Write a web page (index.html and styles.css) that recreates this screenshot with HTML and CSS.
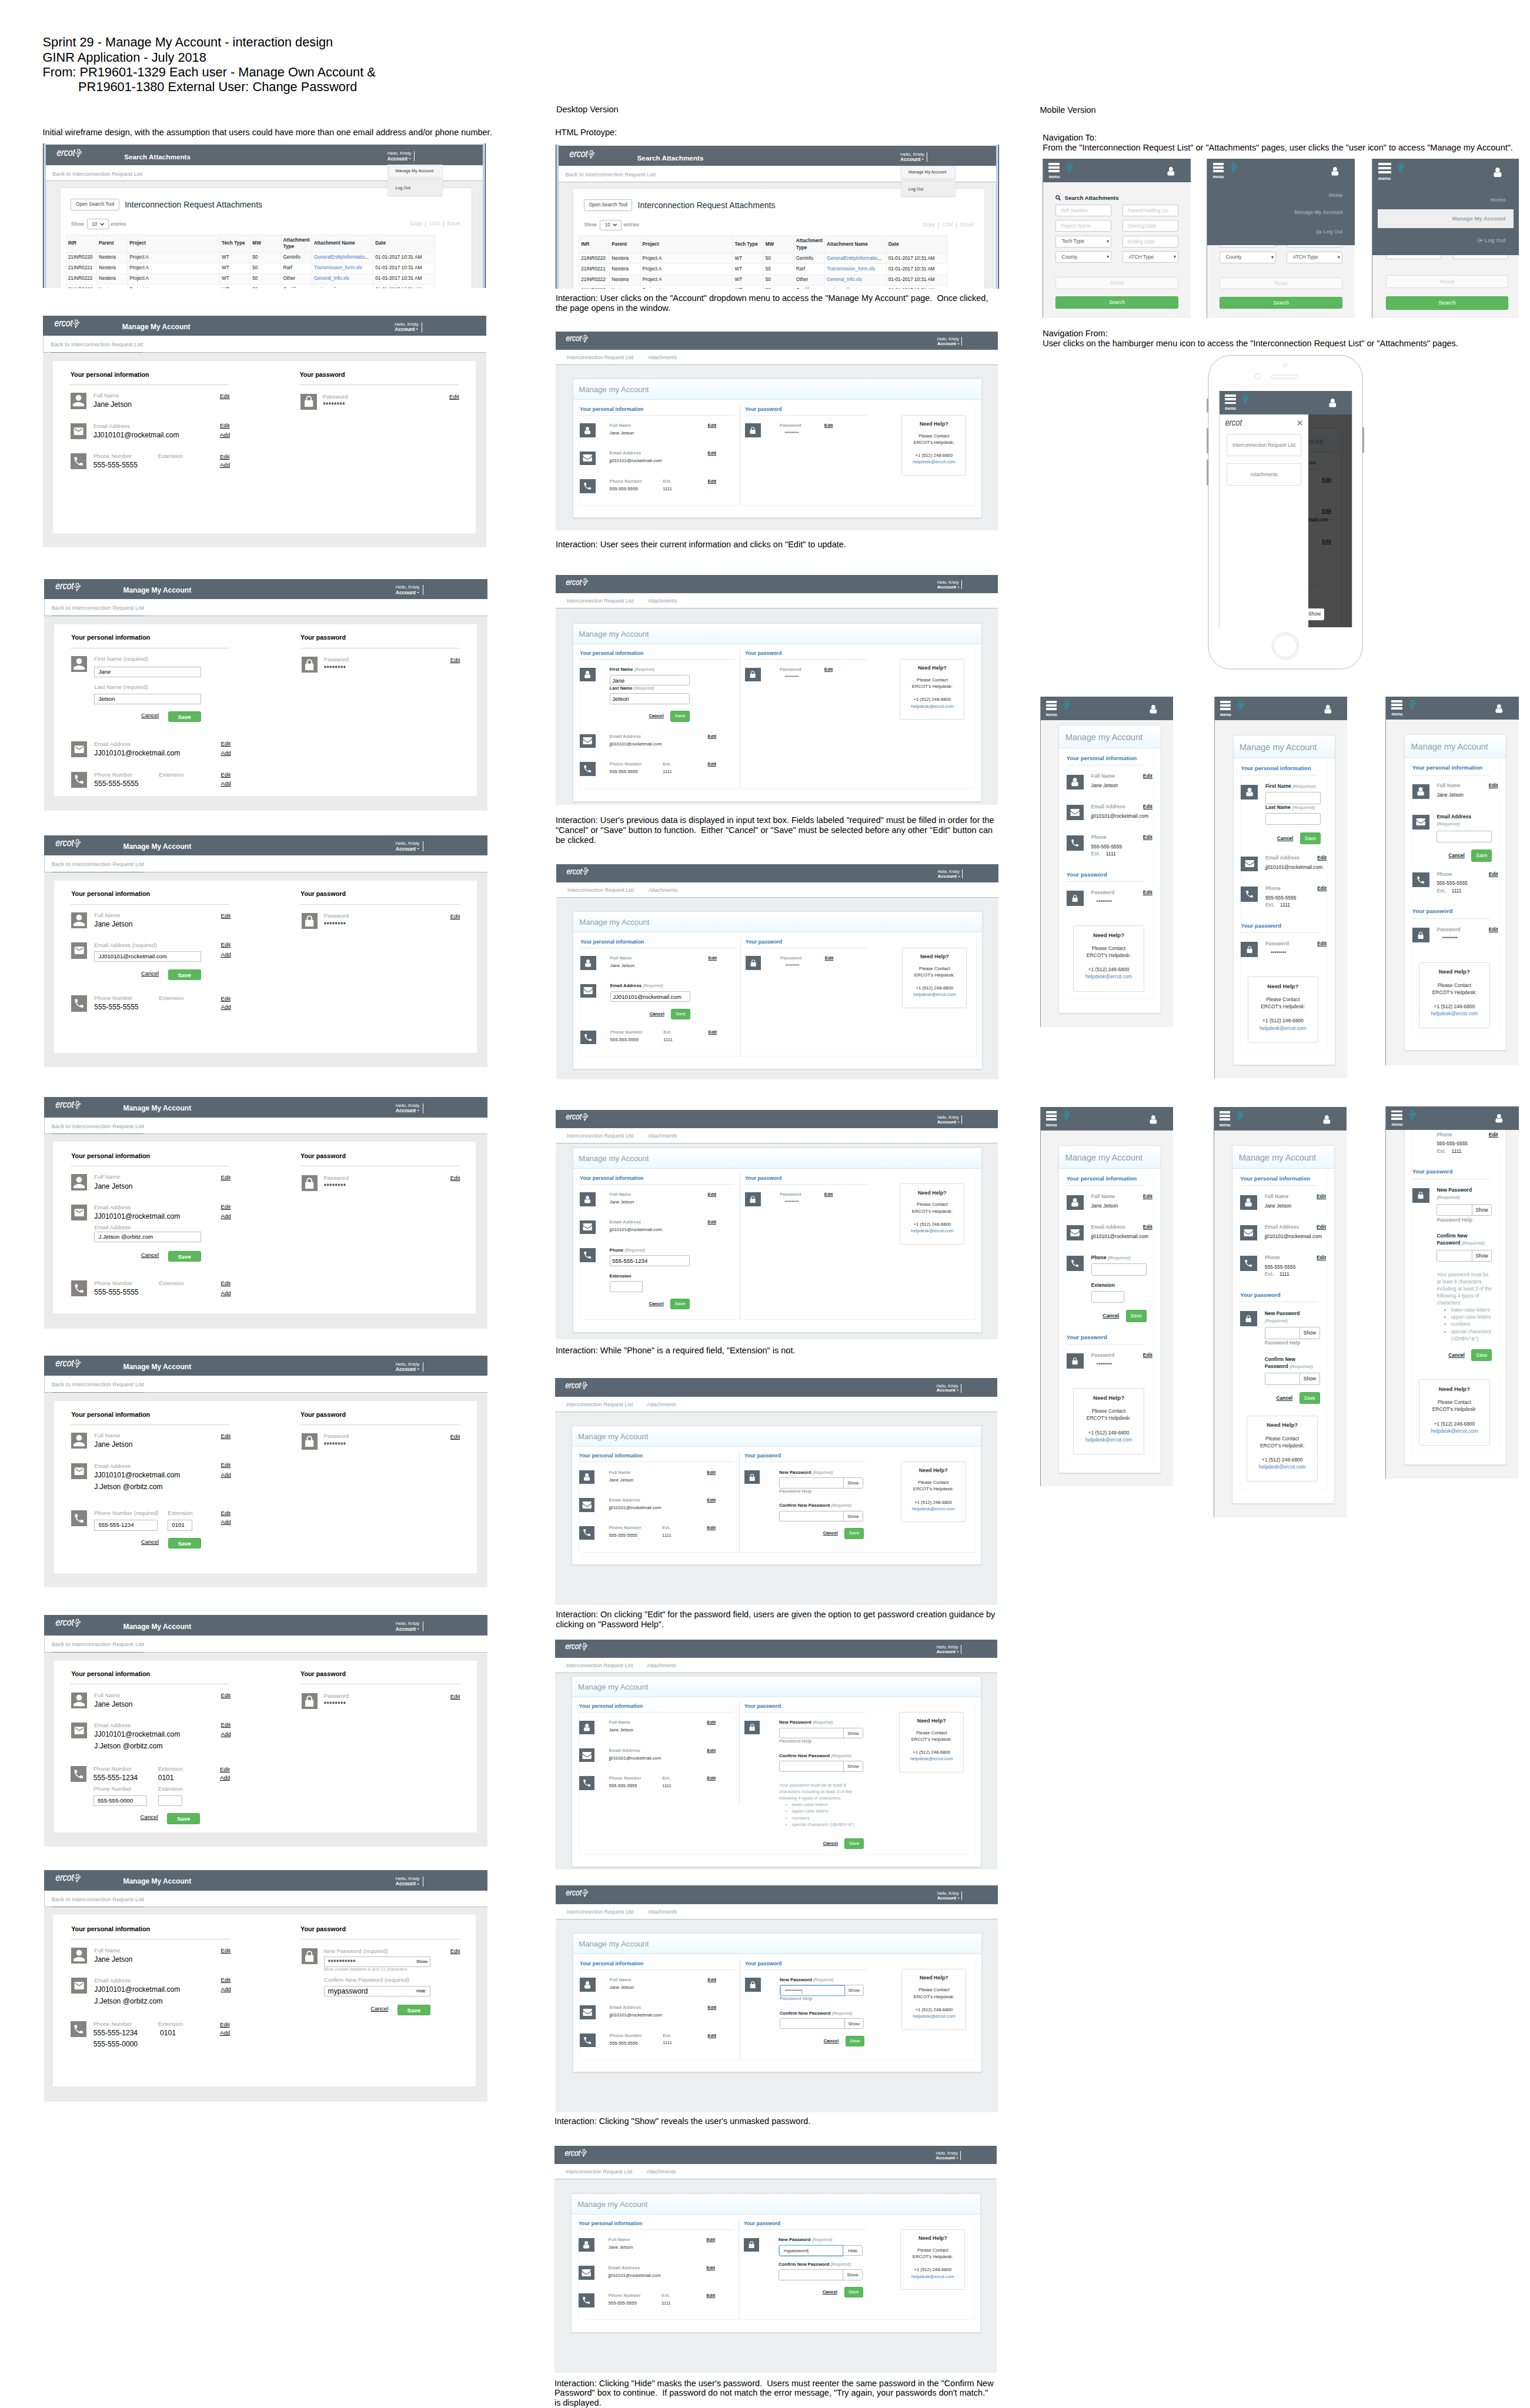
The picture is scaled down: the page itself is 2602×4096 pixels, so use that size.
FILE: index.html
```html
<!DOCTYPE html>
<html lang="en">
<head>
<meta charset="utf-8">
<title>Sprint 29 - Manage My Account - interaction design</title>
<link rel="stylesheet" href="styles.css">
</head>
<body>
<svg class="defs" aria-hidden="true">
  <symbol id="texas" viewBox="0 0 24 28"><path d="M9 10V1.500h7.500L15.500 6c2 2.500 5 1 7.500 4.500M9 10c4-.5 4.500 2.500 8 2M1 11.500c4.500-.5 5 4.500 9 4s5.500-4.500 13-4.500M7.500 19c3 0 2.500 3.500 3 7.500 1.500-4 4-8.500 9-12" fill="none" stroke="currentColor" stroke-width="2.200" stroke-linejoin="round"/></symbol>
  <symbol id="m-user" viewBox="0 0 24 24"><path d="M12 12c2.210 0 4-1.790 4-4s-1.790-4-4-4-4 1.790-4 4 1.790 4 4 4zm0 2c-2.670 0-8 1.340-8 4v1c0 .6.4 1 1 1h14c.6 0 1-.4 1-1v-1c0-2.660-5.330-4-8-4z"/></symbol>
  <symbol id="m-mail" viewBox="0 0 24 24"><path d="M20 4H4c-1.100 0-2 .9-2 2v12c0 1.100.9 2 2 2h16c1.100 0 2-.9 2-2V6c0-1.100-.9-2-2-2zm0 4l-8 5-8-5V6l8 5 8-5v2z"/></symbol>
  <symbol id="phone" viewBox="0 0 24 24"><path d="M6.620 10.790c1.440 2.830 3.760 5.140 6.590 6.590l2.200-2.200c.27-.27.67-.36 1.020-.24 1.120.37 2.330.57 3.570.57.55 0 1 .45 1 1V20c0 .55-.45 1-1 1-9.390 0-17-7.610-17-17 0-.55.45-1 1-1h3.500c.55 0 1 .45 1 1 0 1.250.2 2.450.57 3.570.11.35.03.74-.25 1.020l-2.200 2.200z"/></symbol>
  <symbol id="lock" viewBox="0 0 24 32"><rect x="0" y="13" width="24" height="19" rx="2.500"/><path d="M5.500 15V9a6.500 7 0 0 1 13 0v6" fill="none" stroke="currentColor" stroke-width="3.200"/></symbol>
  <symbol id="f-user" viewBox="0 0 20 24"><ellipse cx="10" cy="6.300" rx="5.500" ry="6.200"/><path d="M.3 19c0-5 1.500-7.800 4.300-7.800 1.500 1.400 3.400 2.100 5.400 2.100s3.900-.7 5.400-2.100c2.800 0 4.300 2.800 4.300 7.800 0 3-1.800 4.900-4.200 4.900h-11C2.100 23.900.3 22 .3 19z"/></symbol>
  <symbol id="f-mail" viewBox="0 0 28 22"><path d="M0 2.500C0 1 1 0 2.500 0h23C27 0 28 1 28 2.500c0 2-1.500 3.700-3 4.800l-8.500 5.900c-1.600 1.100-3.400 1.100-5 0L3 7.300C1.500 6.200 0 4.500 0 2.500zM0 7.500c.5.6 1 1 1.600 1.400l9 6.200c2.200 1.500 4.600 1.500 6.800 0l9-6.200c.6-.4 1.100-.8 1.600-1.400v12c0 1.400-1.100 2.500-2.500 2.500h-23C1.100 22 0 20.900 0 19.500z"/></symbol>
  <symbol id="search" viewBox="0 0 16 16"><circle cx="6.500" cy="6.500" r="5" fill="none" stroke="currentColor" stroke-width="2.200"/><path d="M10 10l5 5" stroke="currentColor" stroke-width="2.800"/></symbol>
  <symbol id="exit" viewBox="0 0 16 14"><path d="M7 1H3C1.900 1 1 1.900 1 3v8c0 1.100.9 2 2 2h4" fill="none" stroke="currentColor" stroke-width="2"/><path d="M5 5h5V2l6 5-6 5V9H5z"/></symbol>
</svg>

<main class="board">

<!-- Column 1: wireframes -->
<section class="col col-wire">
  <h1 class="title">Sprint 29 - Manage My Account - interaction design<br>GINR Application - July 2018<br>From: PR19601-1329 Each user - Manage Own Account &amp;<br>&nbsp;&nbsp;&nbsp;&nbsp;&nbsp;&nbsp;&nbsp;&nbsp;&nbsp;&nbsp;PR19601-1380 External User: Change Password</h1>
  <p class="cap">Initial wireframe design, with the assumption that users could have more than one email address and/or phone number.</p>

  <article class="legacy">
    <header class="bar"><span class="logo"><i>ercot</i><svg><use href="#texas"/></svg></span><h2>Search Attachments</h2><div class="who"><span>Hello, Kristy</span><b>Account<i class="caret"></i></b>
      <ul class="drop"><li>Manage My Account</li><li>Log Out</li></ul></div></header>
    <nav class="crumb">Back to Interconnection Request List</nav>
    <div class="paper">
      <div class="head"><span class="tool">Open Search Tool</span><h3>Interconnection Request Attachments</h3></div>
      <div class="opts"><b>Show</b><span class="sel">10<svg viewBox="0 0 12 8"><path d="M1 1.500l5 5 5-5" fill="none" stroke="#222" stroke-width="2.200"/></svg></span><b>entries</b><span class="exp"><span>Copy</span><span>CSV</span><span>Excel</span></span></div>
      <table><colgroup><col class="c1"><col class="c1"><col class="c3"><col class="c1"><col class="c1"><col class="c1"><col class="c2"><col class="c2"></colgroup>
        <tr><th>INR</th><th>Parent</th><th>Project</th><th>Tech Type</th><th>MW</th><th>Attachment Type</th><th>Attachment Name</th><th>Date</th></tr>
        <tr><td>21INR0220</td><td>Nextera</td><td>Project A</td><td>WT</td><td>50</td><td>GenInfo</td><td><a>GeneralEntityInformatio</a>...</td><td>01-01-2017 10:31 AM</td></tr>
        <tr><td>21INR0221</td><td>Nextera</td><td>Project A</td><td>WT</td><td>50</td><td>Rarf</td><td><a>Transmission_form.xls</a></td><td>01-01-2017 10:31 AM</td></tr>
        <tr><td>21INR0222</td><td>Nextera</td><td>Project A</td><td>WT</td><td>50</td><td>Other</td><td><a>General_Info.xls</a></td><td>01-01-2017 10:31 AM</td></tr>
        <tr><td>21INR0223</td><td>Nextera</td><td>Project A</td><td>WT</td><td>50</td><td>Genlife</td><td><a>testing.pdf</a></td><td>01-01-2017 10:31 AM</td></tr>
      </table>
    </div>
  </article>

  <article class="wire w1">
    <header class="bar"><span class="logo"><i>ercot</i><svg><use href="#texas"/></svg></span><h2>Manage My Account</h2><div class="who"><span>Hello, Kristy</span><b>Account<i class="caret"></i></b></div></header>
    <nav class="crumb"><span>Back to Interconnection Request List</span></nav>
    <div class="sheet">
      <div class="info"><h3>Your personal information</h3>
        <div class="row"><span class="ico user"><svg><use href="#m-user"/></svg></span><div><p class="l">Full Name</p><p class="v">Jane Jetson</p></div><div class="links"><a>Edit</a></div></div>
        <div class="row mail"><span class="ico"><svg><use href="#m-mail"/></svg></span><div><p class="l">Email Address</p><p class="v">JJ010101@rocketmail.com</p></div><div class="links"><a>Edit</a><a>Add</a></div></div>
        <div class="row"><span class="ico"><svg><use href="#phone"/></svg></span><div class="pair"><p class="l">Phone Number</p><p class="l">Extension</p><p class="v">555-555-5555</p></div><div class="links"><a>Edit</a><a>Add</a></div></div>
      </div>
      <div class="pass"><h3>Your password</h3>
        <div class="row"><span class="ico key"><svg><use href="#lock"/></svg></span><div><p class="l">Password</p><p class="v stars">********</p></div><div class="links"><a>Edit</a></div></div>
      </div>
    </div>
  </article>

  <article class="wire w2">
    <header class="bar"><span class="logo"><i>ercot</i><svg><use href="#texas"/></svg></span><h2>Manage My Account</h2><div class="who"><span>Hello, Kristy</span><b>Account<i class="caret"></i></b></div></header>
    <nav class="crumb"><span>Back to Interconnection Request List</span></nav>
    <div class="sheet">
      <div class="info"><h3>Your personal information</h3>
        <div class="row name"><span class="ico user"><svg><use href="#m-user"/></svg></span><div><p class="l">First Name (required)</p><p class="fld t13">Jane</p><p class="l t20">Last Name (required)</p><p class="fld t9">Jetson</p><div class="act"><a>Cancel</a><span class="save">Save</span></div></div></div>
        <div class="row mail"><span class="ico"><svg><use href="#m-mail"/></svg></span><div><p class="l">Email Address</p><p class="v">JJ010101@rocketmail.com</p></div><div class="links"><a>Edit</a><a>Add</a></div></div>
        <div class="row"><span class="ico"><svg><use href="#phone"/></svg></span><div class="pair"><p class="l">Phone Number</p><p class="l">Extension</p><p class="v">555-555-5555</p></div><div class="links"><a>Edit</a><a>Add</a></div></div>
      </div>
      <div class="pass"><h3>Your password</h3>
        <div class="row"><span class="ico key"><svg><use href="#lock"/></svg></span><div><p class="l">Password</p><p class="v stars">********</p></div><div class="links"><a>Edit</a></div></div>
      </div>
    </div>
  </article>

  <article class="wire w3">
    <header class="bar"><span class="logo"><i>ercot</i><svg><use href="#texas"/></svg></span><h2>Manage My Account</h2><div class="who"><span>Hello, Kristy</span><b>Account<i class="caret"></i></b></div></header>
    <nav class="crumb"><span>Back to Interconnection Request List</span></nav>
    <div class="sheet">
      <div class="info"><h3>Your personal information</h3>
        <div class="row"><span class="ico user"><svg><use href="#m-user"/></svg></span><div><p class="l">Full Name</p><p class="v">Jane Jetson</p></div><div class="links"><a>Edit</a></div></div>
        <div class="row mail"><span class="ico"><svg><use href="#m-mail"/></svg></span><div><p class="l">Email Address (required)</p><p class="fld t8">JJ010101@rocketmail.com</p><div class="act"><a>Cancel</a><span class="save">Save</span></div></div><div class="links"><a>Edit</a><a>Add</a></div></div>
        <div class="row"><span class="ico"><svg><use href="#phone"/></svg></span><div class="pair"><p class="l">Phone Number</p><p class="l">Extension</p><p class="v">555-555-5555</p></div><div class="links"><a>Edit</a><a>Add</a></div></div>
      </div>
      <div class="pass"><h3>Your password</h3>
        <div class="row"><span class="ico key"><svg><use href="#lock"/></svg></span><div><p class="l">Password</p><p class="v stars">********</p></div><div class="links"><a>Edit</a></div></div>
      </div>
    </div>
  </article>

  <article class="wire w4 inset">
    <header class="bar"><span class="logo"><i>ercot</i><svg><use href="#texas"/></svg></span><h2>Manage My Account</h2><div class="who"><span>Hello, Kristy</span><b>Account<i class="caret"></i></b></div></header>
    <nav class="crumb"><span>Back to Interconnection Request List</span></nav>
    <div class="sheet">
      <div class="info"><h3>Your personal information</h3>
        <div class="row"><span class="ico user"><svg><use href="#m-user"/></svg></span><div><p class="l">Full Name</p><p class="v">Jane Jetson</p></div><div class="links"><a>Edit</a></div></div>
        <div class="row mail"><span class="ico"><svg><use href="#m-mail"/></svg></span><div><p class="l">Email Address</p><p class="v">JJ010101@rocketmail.com</p><p class="l t11">Email Address</p><p class="fld t3">J.Jetson @orbitz.com</p><div class="act t25"><a>Cancel</a><span class="save">Save</span></div></div><div class="links"><a>Edit</a><a>Add</a></div></div>
        <div class="row"><span class="ico"><svg><use href="#phone"/></svg></span><div class="pair"><p class="l">Phone Number</p><p class="l">Extension</p><p class="v">555-555-5555</p></div><div class="links"><a>Edit</a><a class="t4">Add</a></div></div>
      </div>
      <div class="pass"><h3>Your password</h3>
        <div class="row"><span class="ico key"><svg><use href="#lock"/></svg></span><div><p class="l">Password</p><p class="v stars">********</p></div><div class="links"><a>Edit</a></div></div>
      </div>
    </div>
  </article>

  <article class="wire w5">
    <header class="bar"><span class="logo"><i>ercot</i><svg><use href="#texas"/></svg></span><h2>Manage My Account</h2><div class="who"><span>Hello, Kristy</span><b>Account<i class="caret"></i></b></div></header>
    <nav class="crumb"><span>Back to Interconnection Request List</span></nav>
    <div class="sheet">
      <div class="info"><h3>Your personal information</h3>
        <div class="row"><span class="ico user"><svg><use href="#m-user"/></svg></span><div><p class="l">Full Name</p><p class="v">Jane Jetson</p></div><div class="links"><a>Edit</a></div></div>
        <div class="row mail"><span class="ico"><svg><use href="#m-mail"/></svg></span><div><p class="l">Email Address</p><p class="v">JJ010101@rocketmail.com</p><p class="v t9">J.Jetson @orbitz.com</p></div><div class="links"><a>Edit</a><a>Add</a></div></div>
        <div class="row"><span class="ico"><svg><use href="#phone"/></svg></span><div><div class="pair far"><p class="l">Phone Number (required)</p><p class="l">Extension</p><p class="fld tel t11">555-555-1234</p><p class="fld ext t11">0101</p></div><div class="act"><a>Cancel</a><span class="save">Save</span></div></div><div class="links"><a>Edit</a><a>Add</a></div></div>
      </div>
      <div class="pass"><h3>Your password</h3>
        <div class="row"><span class="ico key"><svg><use href="#lock"/></svg></span><div><p class="l">Password</p><p class="v stars">********</p></div><div class="links"><a>Edit</a></div></div>
      </div>
    </div>
  </article>

  <article class="wire w6">
    <header class="bar"><span class="logo"><i>ercot</i><svg><use href="#texas"/></svg></span><h2>Manage My Account</h2><div class="who"><span>Hello, Kristy</span><b>Account<i class="caret"></i></b></div></header>
    <nav class="crumb"><span>Back to Interconnection Request List</span></nav>
    <div class="sheet">
      <div class="info"><h3>Your personal information</h3>
        <div class="row"><span class="ico user"><svg><use href="#m-user"/></svg></span><div><p class="l">Full Name</p><p class="v">Jane Jetson</p></div><div class="links"><a>Edit</a></div></div>
        <div class="row mail"><span class="ico"><svg><use href="#m-mail"/></svg></span><div><p class="l">Email Address</p><p class="v">JJ010101@rocketmail.com</p><p class="v">J.Jetson @orbitz.com</p></div><div class="links"><a>Edit</a><a>Add</a></div></div>
        <div class="row tel-row"><span class="ico"><svg><use href="#phone"/></svg></span><div><div class="pair"><p class="l">Phone Number</p><p class="l">Extension</p><p class="v">555-555-1234</p><p class="v">0101</p><p class="l t11">Phone Number</p><p class="l t11">Extension</p><p class="fld tel2 t9">555-555-0000</p><p class="fld ext t9"></p></div><div class="act"><a>Cancel</a><span class="save">Save</span></div></div><div class="links"><a>Edit</a><a>Add</a></div></div>
      </div>
      <div class="pass"><h3>Your password</h3>
        <div class="row"><span class="ico key"><svg><use href="#lock"/></svg></span><div><p class="l">Password</p><p class="v stars">********</p></div><div class="links"><a>Edit</a></div></div>
      </div>
    </div>
  </article>

  <article class="wire w7 inset">
    <header class="bar"><span class="logo"><i>ercot</i><svg><use href="#texas"/></svg></span><h2>Manage My Account</h2><div class="who"><span>Hello, Kristy</span><b>Account<i class="caret"></i></b></div></header>
    <nav class="crumb"><span>Back to Interconnection Request List</span></nav>
    <div class="sheet">
      <div class="info"><h3>Your personal information</h3>
        <div class="row"><span class="ico user"><svg><use href="#m-user"/></svg></span><div><p class="l">Full Name</p><p class="v">Jane Jetson</p></div><div class="links"><a>Edit</a></div></div>
        <div class="row mail"><span class="ico"><svg><use href="#m-mail"/></svg></span><div><p class="l">Email Address</p><p class="v">JJ010101@rocketmail.com</p><p class="v">J.Jetson @orbitz.com</p></div><div class="links"><a>Edit</a><a>Add</a></div></div>
        <div class="row tel-row"><span class="ico"><svg><use href="#phone"/></svg></span><div class="pair"><p class="l">Phone Number</p><p class="l">Extension</p><p class="v">555-555-1234</p><p class="v">&nbsp;0101</p><p class="v t8">555-555-0000</p></div><div class="links"><a>Edit</a><a>Add</a></div></div>
      </div>
      <div class="pass"><h3>Your password</h3>
        <div class="row"><span class="ico key"><svg><use href="#lock"/></svg></span><div><p class="l">New Password (required)</p><p class="fld t6 secret"><span>**********</span><small>Show</small></p><p class="hint">Must contain between 6 and 12 characters</p><p class="l t15">Confirm New Password (required)</p><p class="fld t7 big"><span>mypassword</span><small>Hide</small></p><div class="act t24"><a>Cancel</a><span class="save">Save</span></div></div><div class="links"><a>Edit</a></div></div>
      </div>
    </div>
  </article>
</section>

<!-- Column 2: desktop prototype -->
<section class="col col-desk">
  <h2 class="cap x5">Desktop Version</h2>
  <h2 class="cap x2">HTML Protoype:</h2>

  <article class="legacy x3">
    <header class="bar"><span class="logo"><i>ercot</i><svg><use href="#texas"/></svg></span><h2>Search Attachments</h2><div class="who"><span>Hello, Kristy</span><b>Account<i class="caret"></i></b>
      <ul class="drop"><li>Manage My Account</li><li>Log Out</li></ul></div></header>
    <nav class="crumb">Back to Interconnection Request List</nav>
    <div class="paper">
      <div class="head"><span class="tool">Open Search Tool</span><h3>Interconnection Request Attachments</h3></div>
      <div class="opts"><b>Show</b><span class="sel">10<svg viewBox="0 0 12 8"><path d="M1 1.500l5 5 5-5" fill="none" stroke="#222" stroke-width="2.200"/></svg></span><b>entries</b><span class="exp"><span>Copy</span><span>CSV</span><span>Excel</span></span></div>
      <table><colgroup><col class="c1"><col class="c1"><col class="c3"><col class="c1"><col class="c1"><col class="c1"><col class="c2"><col class="c2"></colgroup>
        <tr><th>INR</th><th>Parent</th><th>Project</th><th>Tech Type</th><th>MW</th><th>Attachment Type</th><th>Attachment Name</th><th>Date</th></tr>
        <tr><td>21INR0220</td><td>Nextera</td><td>Project A</td><td>WT</td><td>50</td><td>GenInfo</td><td><a>GeneralEntityInformatio</a>...</td><td>01-01-2017 10:31 AM</td></tr>
        <tr><td>21INR0221</td><td>Nextera</td><td>Project A</td><td>WT</td><td>50</td><td>Rarf</td><td><a>Transmission_form.xls</a></td><td>01-01-2017 10:31 AM</td></tr>
        <tr><td>21INR0222</td><td>Nextera</td><td>Project A</td><td>WT</td><td>50</td><td>Other</td><td><a>General_Info.xls</a></td><td>01-01-2017 10:31 AM</td></tr>
        <tr><td>21INR0223</td><td>Nextera</td><td>Project A</td><td>WT</td><td>50</td><td>Genlife</td><td><a>testing.pdf</a></td><td>01-01-2017 10:31 AM</td></tr>
      </table>
    </div>
  </article>
  <p class="cap x3">Interaction: User clicks on the "Account" dropdown menu to access the "Manage My Account" page.&nbsp; Once clicked,<br>the page opens in the window.</p>

  <article class="proto pa x3">
    <header class="bar"><span class="logo"><i>ercot</i><svg><use href="#texas"/></svg></span><div class="who"><span>Hello, Kristy</span><b>Account<i class="caret"></i></b></div></header>
    <nav class="tabs"><span>Interconnection Request List</span><span>Attachments</span></nav>
    <div class="card"><h2>Manage my Account</h2>
      <div class="in">
        <div class="info"><h3>Your personal information</h3>
          <div class="row"><span class="ico"><svg class="g-user"><use href="#f-user"/></svg></span><div><p class="l">Full Name</p><p class="v">Jane Jetson</p></div><a>Edit</a></div>
          <div class="row"><span class="ico"><svg class="g-mail"><use href="#f-mail"/></svg></span><div><p class="l">Email Address</p><p class="v">jj010101@rocketmail.com</p></div><a>Edit</a></div>
          <div class="row"><span class="ico"><svg class="g-phone"><use href="#phone"/></svg></span><div class="pair"><p class="l">Phone Number</p><p class="l">Ext.</p><p class="v">555-555-5555</p><p class="v">1111</p></div><a>Edit</a></div>
        </div>
        <div class="pass"><h3>Your password</h3>
          <div class="row"><span class="ico"><svg class="g-lock"><use href="#lock"/></svg></span><div><p class="l">Password</p><p class="v stars">********</p></div><a>Edit</a></div>
        </div>
        <aside class="help"><h4>Need Help?</h4><p>Please Contact<br>ERCOT's Helpdesk:<br><br>+1 (512) 248-6800<br><a>helpdesk@ercot.com</a></p></aside>
      </div>
    </div>
  </article>
  <p class="cap x3">Interaction: User sees their current information and clicks on "Edit" to update.</p>

  <article class="proto pb x3">
    <header class="bar"><span class="logo"><i>ercot</i><svg><use href="#texas"/></svg></span><div class="who"><span>Hello, Kristy</span><b>Account<i class="caret"></i></b></div></header>
    <nav class="tabs"><span>Interconnection Request List</span><span>Attachments</span></nav>
    <div class="card"><h2>Manage my Account</h2>
      <div class="in">
        <div class="info"><h3>Your personal information</h3>
          <div class="row name"><span class="ico"><svg class="g-user"><use href="#f-user"/></svg></span><div><p class="l on">First Name <i>(Required)</i></p><p class="fld t6">Jane</p><p class="l on">Last Name <i>(Required)</i></p><p class="fld t6">Jetson</p><div class="act"><a>Cancel</a><span class="save">Save</span></div></div></div>
          <div class="row"><span class="ico"><svg class="g-mail"><use href="#f-mail"/></svg></span><div><p class="l">Email Address</p><p class="v">jj010101@rocketmail.com</p></div><a>Edit</a></div>
          <div class="row"><span class="ico"><svg class="g-phone"><use href="#phone"/></svg></span><div class="pair"><p class="l">Phone Number</p><p class="l">Ext.</p><p class="v">555-555-5555</p><p class="v">1111</p></div><a>Edit</a></div>
        </div>
        <div class="pass"><h3>Your password</h3>
          <div class="row"><span class="ico"><svg class="g-lock"><use href="#lock"/></svg></span><div><p class="l">Password</p><p class="v stars">********</p></div><a>Edit</a></div>
        </div>
        <aside class="help"><h4>Need Help?</h4><p>Please Contact<br>ERCOT's Helpdesk:<br><br>+1 (512) 248-6800<br><a>helpdesk@ercot.com</a></p></aside>
      </div>
    </div>
  </article>
  <p class="cap x3">Interaction: User's previous data is displayed in input text box. Fields labeled "required" must be filled in order for the<br>"Cancel" or "Save" button to function.&nbsp; Either "Cancel" or "Save" must be selected before any other "Edit" button can<br>be clicked.</p>

  <article class="proto pc x5">
    <header class="bar"><span class="logo"><i>ercot</i><svg><use href="#texas"/></svg></span><div class="who"><span>Hello, Kristy</span><b>Account<i class="caret"></i></b></div></header>
    <nav class="tabs"><span>Interconnection Request List</span><span>Attachments</span></nav>
    <div class="card"><h2>Manage my Account</h2>
      <div class="in">
        <div class="info"><h3>Your personal information</h3>
          <div class="row"><span class="ico"><svg class="g-user"><use href="#f-user"/></svg></span><div><p class="l">Full Name</p><p class="v">Jane Jetson</p></div><a>Edit</a></div>
          <div class="row mail"><span class="ico"><svg class="g-mail"><use href="#f-mail"/></svg></span><div><p class="l on">Email Address <i>(Required)</i></p><p class="fld t6">JJ010101@rocketmail.com</p><div class="act"><a>Cancel</a><span class="save">Save</span></div></div></div>
          <div class="row"><span class="ico"><svg class="g-phone"><use href="#phone"/></svg></span><div class="pair"><p class="l">Phone Number</p><p class="l">Ext.</p><p class="v">555-555-5555</p><p class="v">1111</p></div><a>Edit</a></div>
        </div>
        <div class="pass"><h3>Your password</h3>
          <div class="row"><span class="ico"><svg class="g-lock"><use href="#lock"/></svg></span><div><p class="l">Password</p><p class="v stars">********</p></div><a>Edit</a></div>
        </div>
        <aside class="help"><h4>Need Help?</h4><p>Please Contact<br>ERCOT's Helpdesk:<br><br>+1 (512) 248-6800<br><a>helpdesk@ercot.com</a></p></aside>
      </div>
    </div>
  </article>

  <article class="proto pd x3">
    <header class="bar"><span class="logo"><i>ercot</i><svg><use href="#texas"/></svg></span><div class="who"><span>Hello, Kristy</span><b>Account<i class="caret"></i></b></div></header>
    <nav class="tabs"><span>Interconnection Request List</span><span>Attachments</span></nav>
    <div class="card"><h2>Manage my Account</h2>
      <div class="in">
        <div class="info"><h3>Your personal information</h3>
          <div class="row"><span class="ico"><svg class="g-user"><use href="#f-user"/></svg></span><div><p class="l">Full Name</p><p class="v">Jane Jetson</p></div><a>Edit</a></div>
          <div class="row"><span class="ico"><svg class="g-mail"><use href="#f-mail"/></svg></span><div><p class="l">Email Address</p><p class="v">jj010101@rocketmail.com</p></div><a>Edit</a></div>
          <div class="row"><span class="ico"><svg class="g-phone"><use href="#phone"/></svg></span><div><p class="l on">Phone <i>(Required)</i></p><p class="fld t6">555-555-1234</p><p class="l on t20">Extension</p><p class="fld ext t6"></p><div class="act"><a>Cancel</a><span class="save">Save</span></div></div></div>
        </div>
        <div class="pass"><h3>Your password</h3>
          <div class="row"><span class="ico"><svg class="g-lock"><use href="#lock"/></svg></span><div><p class="l">Password</p><p class="v stars">********</p></div><a>Edit</a></div>
        </div>
        <aside class="help"><h4>Need Help?</h4><p>Please Contact<br>ERCOT's Helpdesk:<br><br>+1 (512) 248-6800<br><a>helpdesk@ercot.com</a></p></aside>
      </div>
    </div>
  </article>
  <p class="cap x3">Interaction: While "Phone" is a required field, "Extension" is not.</p>

  <article class="proto pe x1">
    <header class="bar"><span class="logo"><i>ercot</i><svg><use href="#texas"/></svg></span><div class="who"><span>Hello, Kristy</span><b>Account<i class="caret"></i></b></div></header>
    <nav class="tabs"><span>Interconnection Request List</span><span>Attachments</span></nav>
    <div class="card"><h2>Manage my Account</h2>
      <div class="in">
        <div class="info"><h3>Your personal information</h3>
          <div class="row"><span class="ico"><svg class="g-user"><use href="#f-user"/></svg></span><div><p class="l">Full Name</p><p class="v">Jane Jetson</p></div><a>Edit</a></div>
          <div class="row"><span class="ico"><svg class="g-mail"><use href="#f-mail"/></svg></span><div><p class="l">Email Address</p><p class="v">jj010101@rocketmail.com</p></div><a>Edit</a></div>
          <div class="row"><span class="ico"><svg class="g-phone"><use href="#phone"/></svg></span><div class="pair"><p class="l">Phone Number</p><p class="l">Ext.</p><p class="v">555-555-5555</p><p class="v">1111</p></div><a>Edit</a></div>
        </div>
        <div class="pass"><h3>Your password</h3>
          <div class="row"><span class="ico"><svg class="g-lock"><use href="#lock"/></svg></span><div><p class="l on">New Password <i>(Required)</i></p><p class="combo"><span></span><span>Show</span></p><p class="l">Password Help</p><p class="l on t25">Confirm New Password <i>(Required)</i></p><p class="combo"><span></span><span>Show</span></p><div class="act"><a>Cancel</a><span class="save">Save</span></div></div></div>
        </div>
        <aside class="help"><h4>Need Help?</h4><p>Please Contact<br>ERCOT's Helpdesk:<br><br>+1 (512) 248-6800<br><a>helpdesk@ercot.com</a></p></aside>
      </div>
    </div>
  </article>
  <p class="cap x4">Interaction: On clicking "Edit" for the password field, users are given the option to get password creation guidance by<br>clicking on "Password Help".</p>

  <article class="proto pf x1">
    <header class="bar"><span class="logo"><i>ercot</i><svg><use href="#texas"/></svg></span><div class="who"><span>Hello, Kristy</span><b>Account<i class="caret"></i></b></div></header>
    <nav class="tabs"><span>Interconnection Request List</span><span>Attachments</span></nav>
    <div class="card"><h2>Manage my Account</h2>
      <div class="in">
        <div class="info"><h3>Your personal information</h3>
          <div class="row"><span class="ico"><svg class="g-user"><use href="#f-user"/></svg></span><div><p class="l">Full Name</p><p class="v">Jane Jetson</p></div><a>Edit</a></div>
          <div class="row"><span class="ico"><svg class="g-mail"><use href="#f-mail"/></svg></span><div><p class="l">Email Address</p><p class="v">jj010101@rocketmail.com</p></div><a>Edit</a></div>
          <div class="row"><span class="ico"><svg class="g-phone"><use href="#phone"/></svg></span><div class="pair"><p class="l">Phone Number</p><p class="l">Ext.</p><p class="v">555-555-5555</p><p class="v">1111</p></div><a>Edit</a></div>
        </div>
        <div class="pass"><h3>Your password</h3>
          <div class="row"><span class="ico"><svg class="g-lock"><use href="#lock"/></svg></span><div><p class="l on">New Password <i>(Required)</i></p><p class="combo"><span></span><span>Show</span></p><p class="l">Password Help</p><p class="l on t25">Confirm New Password <i>(Required)</i></p><p class="combo"><span></span><span>Show</span></p>
            <div class="rules">Your password must be at least 8<br>characters including at least 3 of the<br>following 4 types of characters:<ul><li>lower-case letters</li><li>upper-case letters</li><li>numbers</li><li>special characters (!@#$%^&amp;*)</li></ul></div>
            <div class="act t29"><a>Cancel</a><span class="save">Save</span></div></div></div>
        </div>
        <aside class="help"><h4>Need Help?</h4><p>Please Contact<br>ERCOT's Helpdesk:<br><br>+1 (512) 248-6800<br><a>helpdesk@ercot.com</a></p></aside>
      </div>
    </div>
  </article>

  <article class="proto pe x3">
    <header class="bar"><span class="logo"><i>ercot</i><svg><use href="#texas"/></svg></span><div class="who"><span>Hello, Kristy</span><b>Account<i class="caret"></i></b></div></header>
    <nav class="tabs"><span>Interconnection Request List</span><span>Attachments</span></nav>
    <div class="card"><h2>Manage my Account</h2>
      <div class="in">
        <div class="info"><h3>Your personal information</h3>
          <div class="row"><span class="ico"><svg class="g-user"><use href="#f-user"/></svg></span><div><p class="l">Full Name</p><p class="v">Jane Jetson</p></div><a>Edit</a></div>
          <div class="row"><span class="ico"><svg class="g-mail"><use href="#f-mail"/></svg></span><div><p class="l">Email Address</p><p class="v">jj010101@rocketmail.com</p></div><a>Edit</a></div>
          <div class="row"><span class="ico"><svg class="g-phone"><use href="#phone"/></svg></span><div class="pair"><p class="l">Phone Number</p><p class="l">Ext.</p><p class="v">555-555-5555</p><p class="v">1111</p></div><a>Edit</a></div>
        </div>
        <div class="pass"><h3>Your password</h3>
          <div class="row"><span class="ico"><svg class="g-lock"><use href="#lock"/></svg></span><div><p class="l on">New Password <i>(Required)</i></p><p class="combo focus"><span>**********|</span><span>Show</span></p><p class="l">Password Help</p><p class="l on t25">Confirm New Password <i>(Required)</i></p><p class="combo"><span></span><span>Show</span></p><div class="act"><a>Cancel</a><span class="save">Save</span></div></div></div>
        </div>
        <aside class="help"><h4>Need Help?</h4><p>Please Contact<br>ERCOT's Helpdesk:<br><br>+1 (512) 248-6800<br><a>helpdesk@ercot.com</a></p></aside>
      </div>
    </div>
  </article>
  <p class="cap">Interaction: Clicking "Show" reveals the user's unmasked password.</p>

  <article class="proto pe ph">
    <header class="bar"><span class="logo"><i>ercot</i><svg><use href="#texas"/></svg></span><div class="who"><span>Hello, Kristy</span><b>Account<i class="caret"></i></b></div></header>
    <nav class="tabs"><span>Interconnection Request List</span><span>Attachments</span></nav>
    <div class="card"><h2>Manage my Account</h2>
      <div class="in">
        <div class="info"><h3>Your personal information</h3>
          <div class="row"><span class="ico"><svg class="g-user"><use href="#f-user"/></svg></span><div><p class="l">Full Name</p><p class="v">Jane Jetson</p></div><a>Edit</a></div>
          <div class="row"><span class="ico"><svg class="g-mail"><use href="#f-mail"/></svg></span><div><p class="l">Email Address</p><p class="v">jj010101@rocketmail.com</p></div><a>Edit</a></div>
          <div class="row"><span class="ico"><svg class="g-phone"><use href="#phone"/></svg></span><div class="pair"><p class="l">Phone Number</p><p class="l">Ext.</p><p class="v">555-555-5555</p><p class="v">1111</p></div><a>Edit</a></div>
        </div>
        <div class="pass"><h3>Your password</h3>
          <div class="row"><span class="ico"><svg class="g-lock"><use href="#lock"/></svg></span><div><p class="l on">New Password <i>(Required)</i></p><p class="combo focus"><span>mypassword|</span><span>Hide</span></p><p class="l on t15">Confirm New Password <i>(Required)</i></p><p class="combo"><span></span><span>Show</span></p><div class="act"><a>Cancel</a><span class="save">Save</span></div></div></div>
        </div>
        <aside class="help"><h4>Need Help?</h4><p>Please Contact<br>ERCOT's Helpdesk:<br><br>+1 (512) 248-6800<br><a>helpdesk@ercot.com</a></p></aside>
      </div>
    </div>
  </article>
  <p class="cap">Interaction: Clicking "Hide" masks the user's password.&nbsp; Users must reenter the same password in the "Confirm New<br>Password" box to continue.&nbsp; If password do not match the error message, "Try again, your passwords don't match."<br>is displayed.</p>
</section>

<!-- Column 3: mobile -->
<section class="col col-mob">
  <h2 class="cap">Mobile Version</h2>
  <p class="cap x8">Navigation To:<br>From the "Interconnection Request List" or "Attachments" pages, user clicks the "user icon" to access "Manage my Account".</p>

  <div class="line finders">
    <article class="find">
      <header class="mbar"><div class="burger"><i></i><i></i><i></i><b>menu</b></div><svg class="tx"><use href="#texas"/></svg><svg class="me"><use href="#f-user"/></svg></header>
      <h3><svg><use href="#search"/></svg>Search Attachments</h3>
      <div class="grid"><span class="ph-t">INR Number</span><span class="ph-t">Parent/Holding Co.</span><span class="ph-t">Project Name</span><span class="ph-t">Starting Date</span><span class="pick">Tech Type</span><span class="ph-t">Ending Date</span><span class="pick">County</span><span class="pick">ATCH Type</span></div>
      <span class="btn reset">Reset</span><span class="btn go">Search</span>
    </article>
    <article class="find open">
      <header class="mbar"><div class="burger"><i></i><i></i><i></i><b>menu</b></div><svg class="tx"><use href="#texas"/></svg><svg class="me"><use href="#f-user"/></svg></header>
      <ul class="menu"><li>Home</li><li>Manage My Account</li><li><svg><use href="#exit"/></svg>Log Out</li></ul>
      <div class="grid"><span class="cut"></span><span class="cut"></span><span class="pick">County</span><span class="pick">ATCH Type</span></div>
      <span class="btn reset">Reset</span><span class="btn go">Search</span>
    </article>
    <article class="find open large">
      <header class="mbar"><div class="burger"><i></i><i></i><i></i><b>menu</b></div><svg class="tx"><use href="#texas"/></svg><svg class="me"><use href="#f-user"/></svg></header>
      <ul class="menu"><li>Home</li><li class="hot">Manage My Account</li><li><svg><use href="#exit"/></svg>Log Out</li></ul>
      <div class="grid"><span class="cut"></span><span class="cut"></span></div>
      <span class="btn reset">Reset</span><span class="btn go">Search</span>
    </article>
  </div>

  <p class="cap x8">Navigation From:<br>User clicks on the hamburger menu icon to access the "Interconnection Request List" or "Attachments" pages.</p>

  <div class="handset">
    <svg class="shell" viewBox="0 0 444 884"><g fill="#a8a8a8"><rect x="0" y="122" width="5" height="39" rx="2"/><rect x="0" y="205" width="5" height="72" rx="2"/><rect x="0" y="294" width="5" height="72" rx="2"/><rect x="438" y="203" width="5" height="72" rx="2"/></g><rect x="5" y="1" width="433" height="882" rx="62" fill="#fff" stroke="#a0a0a0" stroke-width="1.200"/><g fill="none" stroke="#cfcfcf" stroke-width="1.400"><circle cx="220.500" cy="28" r="5"/><circle cx="144" cy="60" r="7.500"/><rect x="182.500" y="56" width="76" height="9" rx="4.500"/><circle cx="221.500" cy="818" r="37.500"/><circle cx="221.500" cy="818" r="32.500"/></g></svg>
    <div class="screen">
      <header class="mbar"><div class="burger"><i></i><i></i><i></i><b>menu</b></div><svg class="tx"><use href="#texas"/></svg><svg class="me"><use href="#f-user"/></svg></header>
      <div class="split">
        <nav class="side"><div class="top"><span class="logo dark"><i>ercot</i></span><svg viewBox="0 0 16 16"><path d="M1.500 1.500l13 13M14.500 1.500l-13 13" stroke="#808080" stroke-width="3"/></svg></div><a>Interconnection Request List</a><a>Attachments</a></nav>
        <div class="dim"><div class="page"><p class="tt">ount</p><p class="hh">on</p><a>Edit</a><a class="e2">Edit</a><p class="vv">mail.com</p><a class="e3">Edit</a><p class="ln"></p><span>Show</span></div></div>
      </div>
    </div>
  </div>

  <div class="line phones">
    <article class="mob m1">
      <header class="mbar"><div class="burger"><i></i><i></i><i></i><b>menu</b></div><svg class="tx"><use href="#texas"/></svg><svg class="me"><use href="#f-user"/></svg></header>
      <div class="card"><h2>Manage my Account</h2><div class="in">
        <h3>Your personal information</h3>
        <div class="row"><span class="ico"><svg class="g-user"><use href="#f-user"/></svg></span><div><p class="l">Full Name</p><p class="v">Jane Jetson</p></div><a>Edit</a></div>
        <div class="row"><span class="ico"><svg class="g-mail"><use href="#f-mail"/></svg></span><div><p class="l">Email Address</p><p class="v">jj010101@rocketmail.com</p></div><a>Edit</a></div>
        <div class="row tel"><span class="ico"><svg class="g-phone"><use href="#phone"/></svg></span><div><p class="l">Phone</p><p class="v">555-555-5555</p><p class="x"><b>Ext.</b>1111</p></div><a>Edit</a></div>
        <h3>Your password</h3>
        <div class="row key"><span class="ico"><svg class="g-lock"><use href="#lock"/></svg></span><div><p class="l">Password</p><p class="v stars">********</p></div><a>Edit</a></div>
        <aside class="help"><h4>Need Help?</h4><p>Please Contact<br>ERCOT's Helpdesk:<br><br>+1 (512) 248-6800<br><a>helpdesk@ercot.com</a></p></aside>
      </div></div>
    </article>
    <article class="mob m2">
      <header class="mbar"><div class="burger"><i></i><i></i><i></i><b>menu</b></div><svg class="tx"><use href="#texas"/></svg><svg class="me"><use href="#f-user"/></svg></header>
      <div class="card"><h2>Manage my Account</h2><div class="in">
        <h3>Your personal information</h3>
        <div class="row edit-name"><span class="ico"><svg class="g-user"><use href="#f-user"/></svg></span><div><p class="l on">First Name <i>(Required)</i></p><p class="fld"></p><p class="l on t2">Last Name <i>(Required)</i></p><p class="fld"></p><div class="act"><a>Cancel</a><span class="save">Save</span></div></div></div>
        <div class="row"><span class="ico"><svg class="g-mail"><use href="#f-mail"/></svg></span><div><p class="l">Email Address</p><p class="v">jj010101@rocketmail.com</p></div><a>Edit</a></div>
        <div class="row tel"><span class="ico"><svg class="g-phone"><use href="#phone"/></svg></span><div><p class="l">Phone</p><p class="v">555-555-5555</p><p class="x"><b>Ext.</b>1111</p></div><a>Edit</a></div>
        <h3>Your password</h3>
        <div class="row key"><span class="ico"><svg class="g-lock"><use href="#lock"/></svg></span><div><p class="l">Password</p><p class="v stars">********</p></div><a>Edit</a></div>
        <aside class="help"><h4>Need Help?</h4><p>Please Contact<br>ERCOT's Helpdesk:<br><br>+1 (512) 248-6800<br><a>helpdesk@ercot.com</a></p></aside>
      </div></div>
    </article>
    <article class="mob m3">
      <header class="mbar"><div class="burger"><i></i><i></i><i></i><b>menu</b></div><svg class="tx"><use href="#texas"/></svg><svg class="me"><use href="#f-user"/></svg></header>
      <div class="card"><h2>Manage my Account</h2><div class="in">
        <h3>Your personal information</h3>
        <div class="row"><span class="ico"><svg class="g-user"><use href="#f-user"/></svg></span><div><p class="l">Full Name</p><p class="v">Jane Jetson</p></div><a>Edit</a></div>
        <div class="row edit-mail"><span class="ico"><svg class="g-mail"><use href="#f-mail"/></svg></span><div><p class="l on">Email Address<br><i>(Required)</i></p><p class="fld"></p><div class="act"><a>Cancel</a><span class="save">Save</span></div></div></div>
        <div class="row tel"><span class="ico"><svg class="g-phone"><use href="#phone"/></svg></span><div><p class="l">Phone</p><p class="v">555-555-5555</p><p class="x"><b>Ext.</b>1111</p></div><a>Edit</a></div>
        <h3>Your password</h3>
        <div class="row key"><span class="ico"><svg class="g-lock"><use href="#lock"/></svg></span><div><p class="l">Password</p><p class="v stars">********</p></div><a>Edit</a></div>
        <aside class="help"><h4>Need Help?</h4><p>Please Contact<br>ERCOT's Helpdesk:<br><br>+1 (512) 248-6800<br><a>helpdesk@ercot.com</a></p></aside>
      </div></div>
    </article>
  </div>

  <div class="line phones second">
    <article class="mob m4">
      <header class="mbar"><div class="burger"><i></i><i></i><i></i><b>menu</b></div><svg class="tx"><use href="#texas"/></svg><svg class="me"><use href="#f-user"/></svg></header>
      <div class="card"><h2>Manage my Account</h2><div class="in">
        <h3>Your personal information</h3>
        <div class="row"><span class="ico"><svg class="g-user"><use href="#f-user"/></svg></span><div><p class="l">Full Name</p><p class="v">Jane Jetson</p></div><a>Edit</a></div>
        <div class="row"><span class="ico"><svg class="g-mail"><use href="#f-mail"/></svg></span><div><p class="l">Email Address</p><p class="v">jj010101@rocketmail.com</p></div><a>Edit</a></div>
        <div class="row edit-tel"><span class="ico"><svg class="g-phone"><use href="#phone"/></svg></span><div><p class="l on">Phone <i>(Required)</i></p><p class="fld"></p><p class="l on t20">Extension</p><p class="fld ext"></p><div class="act"><a>Cancel</a><span class="save">Save</span></div></div></div>
        <h3>Your password</h3>
        <div class="row key"><span class="ico"><svg class="g-lock"><use href="#lock"/></svg></span><div><p class="l">Password</p><p class="v stars">********</p></div><a>Edit</a></div>
        <aside class="help"><h4>Need Help?</h4><p>Please Contact<br>ERCOT's Helpdesk:<br><br>+1 (512) 248-6800<br><a>helpdesk@ercot.com</a></p></aside>
      </div></div>
    </article>
    <article class="mob m5">
      <header class="mbar"><div class="burger"><i></i><i></i><i></i><b>menu</b></div><svg class="tx"><use href="#texas"/></svg><svg class="me"><use href="#f-user"/></svg></header>
      <div class="card"><h2>Manage my Account</h2><div class="in">
        <h3>Your personal information</h3>
        <div class="row"><span class="ico"><svg class="g-user"><use href="#f-user"/></svg></span><div><p class="l">Full Name</p><p class="v">Jane Jetson</p></div><a>Edit</a></div>
        <div class="row"><span class="ico"><svg class="g-mail"><use href="#f-mail"/></svg></span><div><p class="l">Email Address</p><p class="v">jj010101@rocketmail.com</p></div><a>Edit</a></div>
        <div class="row tel"><span class="ico"><svg class="g-phone"><use href="#phone"/></svg></span><div><p class="l">Phone</p><p class="v">555-555-5555</p><p class="x"><b>Ext.</b>1111</p></div><a>Edit</a></div>
        <h3>Your password</h3>
        <div class="row edit-key"><span class="ico"><svg class="g-lock"><use href="#lock"/></svg></span><div><p class="l on">New Password<br><i>(Required)</i></p><p class="combo"><span></span><span>Show</span></p><p class="l hp">Password Help</p><p class="l on t25">Confirm New<br>Password <i>(Required)</i></p><p class="combo"><span></span><span>Show</span></p><div class="act"><a>Cancel</a><span class="save">Save</span></div></div></div>
        <aside class="help"><h4>Need Help?</h4><p>Please Contact<br>ERCOT's Helpdesk:<br><br>+1 (512) 248-6800<br><a>helpdesk@ercot.com</a></p></aside>
      </div></div>
    </article>
    <article class="mob m6">
      <header class="mbar"><div class="burger"><i></i><i></i><i></i><b>menu</b></div><svg class="tx"><use href="#texas"/></svg><svg class="me"><use href="#f-user"/></svg></header>
      <div class="card"><div class="in">
        <div class="row tel"><span class="ico none"></span><div><p class="l">Phone</p><p class="v">555-555-5555</p><p class="x"><b>Ext.</b>1111</p></div><a>Edit</a></div>
        <h3>Your password</h3>
        <div class="row edit-key"><span class="ico"><svg class="g-lock"><use href="#lock"/></svg></span><div><p class="l on">New Password<br><i>(Required)</i></p><p class="combo"><span></span><span>Show</span></p><p class="l hp">Password Help</p><p class="l on t25">Confirm New<br>Password <i>(Required)</i></p><p class="combo"><span></span><span>Show</span></p>
          <div class="rules">Your password must be<br>at least 8 characters<br>including at least 3 of the<br>following 4 types of<br>characters:<ul><li>lower-case letters</li><li>upper-case letters</li><li>numbers</li><li>special characters<br>(!@#$%^&amp;*)</li></ul></div>
          <div class="act"><a>Cancel</a><span class="save">Save</span></div></div></div>
        <aside class="help"><h4>Need Help?</h4><p>Please Contact<br>ERCOT's Helpdesk:<br><br>+1 (512) 248-6800<br><a>helpdesk@ercot.com</a></p></aside>
      </div></div>
    </article>
  </div>
</section>
</main>
</body>
</html>
```
FILE: styles.css
```css
*{box-sizing:border-box}
body{margin:0;background:#fff;color:#000;font-family:"Liberation Sans",Arial,sans-serif;overflow:hidden}
h1,h2,h3,h4,p,ul{margin:0;padding:0;font-weight:400}
ul{list-style:none}
svg{display:block;fill:currentColor;overflow:visible}
.defs{position:absolute;width:0;height:0}

/* The board is laid out at 4302 x 6772 and scaled as a whole */
.board{zoom:.60483;width:4302px;height:6772px;display:grid;grid-template-columns:1439px 1365px 1378px;padding-left:120px;white-space:nowrap;overflow:hidden}
.col{display:grid;align-items:start;align-content:start;justify-items:start}
.col-wire{grid-template-rows:261px 44.8px 484.100px 740.100px 721px 736.400px 727.200px 730px 717.300px 660px;padding-top:98px}
.col-desk{grid-template-rows:64px 47.400px 418.500px 107.100px 586px 99px 676px 137px 691px 663.400px 91.500px 650.800px 84px 692.600px 648.700px 83px 654px 83px;padding-top:295px}
.col-mob{grid-template-rows:77px 74px 478px 73px 962px 1154px 1160px;padding-top:296px}
.title{font-size:36px;line-height:41.800px}
.cap{font-size:24px;line-height:28px}
.x1{margin-left:1.500px}.x2{margin-left:2px}.x3{margin-left:3.400px}.x4{margin-left:4px}.x5{margin-left:5px}.x8{margin-left:8px}
.t2{margin-top:2px!important}.t3{margin-top:3px!important}.t4{margin-top:4px!important}.t6{margin-top:6px!important}.t7{margin-top:7px!important}.t8{margin-top:8px!important}
.t9{margin-top:9.500px!important}.t11{margin-top:11px!important}.t13{margin-top:13px!important}.t15{margin-top:15.500px!important}.t20{margin-top:20px!important}
.t24{margin-top:23.500px!important}.t25{margin-top:25px!important}.t29{margin-top:29px!important}

/* Shared header */
.bar{display:flex;align-items:flex-start;background:#5b6770;color:#fff}
.logo{display:flex;align-items:flex-start}
.logo i{width:51px;font-size:28px;line-height:28px;transform:scaleX(.82) skewX(-4deg);transform-origin:0 100%;-webkit-text-stroke:.5px}
.logo svg{width:21px;height:26px;margin:2px 0 0 1px}
.who{position:relative;font-size:12.600px;line-height:15px;border-right:1px solid #fff}
.who span,.who b{display:block}
.who b{font-size:14.300px;display:flex;align-items:center}
.caret{margin-left:3px;border:4px solid transparent;border-top-color:#fff;border-bottom:0}
.save{background:#5cb85c;color:#fff;border:1px solid #4cae4c;border-radius:4px;text-align:center}
.act{display:flex;justify-content:flex-end}
.act a,.links a{text-decoration:underline}

/* Search Attachments page */
.legacy{width:1246px;height:406px;overflow:hidden;background:#eee;border-left:1px solid #222;border-right:1px solid #222;padding:0 6.500px;box-shadow:inset 7px 0 #b9d0ea,inset -7px 0 #b9d0ea}
.legacy .bar{background:#5f6770;height:60px;border-top:4px solid #eef1f5;padding-left:30px}
.legacy .logo{padding-top:10px;width:191px}
.legacy .bar h2{font-size:19.400px;font-weight:700;line-height:22px;padding-top:23px;width:740px}
.legacy .who{margin-top:18px;height:27.500px;width:76px;line-height:14px}
.legacy .crumb{position:static;height:46px;background:#fff;border-bottom:1px solid #bbb;padding-left:19px;font-size:15.600px;line-height:48px;color:#98a3a9}
.drop{position:absolute;left:1px;top:38px;width:155px;height:87px;background:#eee;border-radius:0 0 4px 4px;box-shadow:0 1px 3px rgba(0,0,0,.2);color:#333;font-size:11.800px;padding:4px 4px 0;z-index:2}
.drop li{padding-left:18px;height:38px;line-height:30px}
.drop li:first-child{background:linear-gradient(#f6f6f6,#f6f6f6) 0 0/100% 30px no-repeat;border-bottom:1px solid #ddd}
.drop li:last-child{line-height:50px}
.paper{margin:17px 31px 0 40px;height:300px;background:#fff;border:1px solid #e2e2e2;border-radius:4px;padding:30px 32px 0 15px}
.head{display:flex;align-items:center;height:33px;padding-left:14px}
.tool{width:137px;height:33px;border:1px solid #bbb;border-radius:4px;text-align:center;font-size:13.600px;line-height:31px;color:#444}
.head h3{margin-left:15px;font-size:23.300px;color:#1c3038}
.opts{display:flex;align-items:center;margin:24px 0 0 15px;height:30px;font-size:13.500px;color:#9aa2aa}
.sel{display:flex;align-items:center;justify-content:space-between;width:61px;height:30px;margin:0 5px 0 9px;border:1px solid #bbb;border-radius:4px;padding:0 11px 0 12px;color:#444}
.sel svg{width:12px;height:8px}
.exp{display:flex;margin-left:auto;color:#ccc;font-size:14.500px;line-height:16px}
.exp span+span{border-left:1px solid #ccc;margin-left:9px;padding-left:10px}
.legacy table{margin-top:13.500px;width:1036px;table-layout:fixed;border-collapse:collapse;font-size:13.600px;color:#222}
.c1{width:86.300px}.c2{width:173px}.c3{width:259.500px}
.legacy th,.legacy td{height:30px;padding:0 0 0 5px;border:1px solid #eee;text-align:left;line-height:17px}
.legacy th{height:50px;background:#f8f8f8;color:#1c3038;font-weight:700;line-height:19px;white-space:normal}
.legacy tr:nth-child(even) td{background:#fafafa}
.legacy td a{color:#4681bd}

/* Grey wireframes */
.wire{width:1247px;height:651.200px;background:#ebebeb}
.w1{margin-left:.7px}
.wire:not(.w1){margin-left:3.300px}
.wire .bar{height:57px;padding-left:31.500px}
.wire .logo{padding-top:8px;width:191.500px}
.wire .bar h2{font-size:19.900px;font-weight:700;line-height:24px;padding-top:20px;width:766px}
.wire .who{margin-top:17.500px;width:78px;height:28px;line-height:14px}
.wire .crumb{height:47.500px;background:#fff;border-left:1px solid #b9d0dc;border-bottom:1px solid #b5bcc0;padding-left:20px;font-size:16px;line-height:48px;color:#95a1a8}
.wire .crumb span{display:inline-block;height:47.500px;border-bottom:1px solid #7f898f}
.sheet{display:flex;margin:23.500px 0 0 28.200px;width:1189px;height:483.500px;background:#fff;padding:28.700px 0 0 46.500px}
.inset .sheet{margin:20.500px 0 0 25px;padding:31.700px 0 0 49.700px}
.wire h3{height:38.500px;font-size:17.840px;font-weight:700;line-height:18px;border-bottom:1.700px solid #d4d4d4}
.wire .info{width:447px}
.wire .info h3{padding-left:2.500px}
.wire .pass{width:448px;margin-left:200px}
.wire .row{display:grid;grid-template-columns:64.700px 355.700px auto;padding-left:2.500px;height:85px}
.wire h3+.row{margin-top:22px}
.wire .pass h3+.row{margin-top:24px;padding-left:3.300px;grid-template-columns:62.100px 355.700px auto}
.wire .ico{display:flex;align-items:center;justify-content:center;width:45px;height:45px;background:#858280;color:#fff}
.wire .ico svg{width:32px;height:32px}
.wire .user svg{width:48px;height:48px}
.wire .key svg{width:24px;height:32px}
.wire .l{font-size:16px;line-height:16.600px;color:#a0a0a0}
.wire .v{margin-top:5px;font-size:20px;line-height:24px;height:24px}
.wire .v+.v{margin-top:9.500px}
.pair .v+.v{margin-top:5px!important}
.pair .v.t8{margin-top:8px!important}
.wire .stars{margin-top:4px;letter-spacing:0}
.wire .pair{display:grid;grid-template-columns:181.600px auto;align-content:start;justify-content:start;justify-items:start}
.wire .far{grid-template-columns:206.500px auto}
.wire .links{font-size:16px;line-height:18px;margin-top:1px;display:flex;flex-direction:column;gap:6px;align-items:flex-start}
.wire .mail .links{margin-top:-2px;gap:9px}
.wire .fld{width:300px;height:30px;border:1px solid #bdbdbd;background:#fff;padding-left:10px;font-size:16px;line-height:28px}
.wire .tel{width:178px}.wire .tel2{width:150px}.wire .ext{width:69px}
.wire .act{width:300px;margin-top:20px;font-size:16px;line-height:23px}
.wire .act a{margin-right:25.500px}
.wire .save{width:93px;height:30px;line-height:29px;font-weight:700}
.wire .secret,.wire .big{display:flex;justify-content:space-between}
.wire .fld small{width:38px;font-size:12.500px;margin-top:1px}
.wire .secret,.wire .big{font-size:20px}
.wire .secret span{line-height:32px}
.hint{font-size:12.500px;line-height:14px;color:#a8a8a8}
.w2 .name{height:240px}.w3 .mail{height:148.700px}.w4 .mail{height:213px}.w5 .mail{height:132.500px}
.w6 .mail,.w7 .mail{height:122.300px}
.tel-row{margin-left:-2.500px}

/* Desktop prototype */
.proto{width:1244px;height:638px;background:#edeeef}
.proto .bar{height:52px;padding-left:28.500px}
.proto .logo{padding-top:8px;width:1044px}
.proto .logo i{width:44px;font-size:24px;line-height:24px}
.proto .logo svg{width:19px;height:24px;margin:1px 0 0 1px}
.proto .who{margin-top:15.500px;width:70.500px;height:25px;font-size:11.500px;line-height:13px}
.proto .who b{font-size:13.400px}
.tabs{display:flex;gap:40px;height:43px;background:#fff;border-bottom:1.700px solid #b5b9bc;padding-left:31.500px;font-size:14.800px;line-height:45px;color:#98a1a9}
.proto .card{margin:38.500px 0 0 47.200px;width:1151px;height:391.500px;background:#fefefe;border:1px solid #dfe2e4;border-radius:3px;box-shadow:0 1px 3px rgba(0,0,0,.12)}
.proto .card h2{height:58px;padding-left:16px;font-size:21.800px;line-height:61px;color:#929ca4;background:linear-gradient(#fff,#ecf8fe);border-bottom:1px solid #d9e6ec}
.proto .in{display:flex;align-items:flex-start;margin:14px 0 0 17.300px;width:1116px;height:283px;border:1px solid #f3f3f3;border-top:0}
.proto .info{width:451px;height:100%;border-right:1px solid #e3e3e3;padding-right:15px}
.proto .pass{width:358px;padding-left:13.500px}
.proto h3{height:29.500px;border-bottom:1px solid #e8e8e8;font-size:14.450px;font-weight:700;line-height:25px;color:#337ab7;margin-bottom:22.500px}
.proto .row{display:grid;grid-template-columns:83.700px 276px auto;height:78.300px}
.proto .pass .row{grid-template-columns:97.800px 125.200px auto}
.proto .ico,.mob .ico{display:flex;align-items:center;justify-content:center;width:44px;height:39px;background:#5b6770;color:#fff}
.g-user{width:20px;height:21px}.g-mail{width:27px;height:20px}.g-phone{width:27px;height:26px}.g-lock{width:17px;height:20px}
.proto .row>div,.proto .row>a{margin-top:-2px}
.proto .row>a,.mob .row>a{font-weight:700;text-decoration:underline;color:#122b33}
.proto .row,.proto .help{font-size:12.800px;line-height:16px;color:#333}
.proto .l,.mob .l{font-weight:700;color:#9aa5ad}
.proto .on,.mob .on{color:#122b33}
.on i{color:#a9b2b8;font-weight:700}
.proto .on i{font-size:11.500px}
.proto .v{margin-top:5.500px;line-height:18px}
.proto .stars{padding-left:14px}
.proto .pair{display:grid;grid-template-columns:150px auto;align-content:start}
.proto .fld{width:225px;height:30.700px;border:1px solid #bbb;border-radius:4px;background:#fff;padding-left:6px;font-size:16px;line-height:29px;color:#000}
.proto .ext{width:94px}
.proto .act{width:225px;margin-top:18.500px;line-height:31px}
.proto .act a,.mob .act a{font-weight:700;color:#122b33;margin-right:19px}
.proto .save{width:53.500px;height:31px;line-height:28px;font-size:12.800px}
.proto .pass .act{width:238px}
.combo{display:flex;width:236px;height:30.700px;margin-top:6px;border:1px solid #bbb;border-radius:4px;background:#fff;line-height:29px}
.combo span:first-child{width:181px;border-right:1px solid #bbb;padding-left:11px;font-size:12px}
.combo span:last-child{flex:1;text-align:center}
.combo.focus span:first-child{margin:-1px 0;height:30.700px;border:1.700px solid #66afe9;border-radius:4px 0 0 4px;box-shadow:0 0 5px rgba(102,175,233,.6)}
.help{border:1px solid #ddd;border-radius:4px;text-align:center}
.help h4{font-weight:700}
.help a{color:#4681bd}
.proto .help{margin:27.500px 0 0 96px;width:182px;height:171px;padding-top:15px}
.proto .help h4{font-size:14.700px;line-height:18px}
.proto .help p{margin-top:15px;line-height:18.500px}
.rules{color:#a0a8ae;line-height:18.500px;margin-top:28px}
.rules ul{list-style:disc;padding-left:36px}
.pa{height:559px}
.pb{height:646px}.pb .card{height:503px;margin-top:40px}.pb .in{height:394px}.pb .name{height:187.200px}
.pc{height:605px}.pc .card{height:444px}.pc .in{height:334px}.pc .mail{height:130.500px}
.pd{height:645px}.pd .card{height:520.400px;margin-top:12px}.pd .in{height:411px}
.pf{height:646.500px}.pf .card{height:538.500px;margin-top:7.500px}.pf .in{height:430px}.pf .info{height:288px}
.pb .help,.pd .help,.pf .help{margin-left:91px}

/* Mobile header */
.mbar{display:flex;align-items:flex-start;height:66px;background:#5b6770;color:#fff;padding-left:15px}
.burger{width:30.500px}
.burger i{display:block;height:6px;border-radius:1px;background:#fff;margin-bottom:4.200px}
.burger i:first-child{margin-top:11px}
.burger b{display:block;font-size:11.700px;line-height:14px;margin-top:7px}
.tx{width:22px;height:26px;margin:11px 0 0 16px;color:#12a2bb}
.me{width:21px;height:24.500px;margin:22px 45px 0 auto}

/* Mobile search screens */
.line{display:flex;align-items:flex-start}
.find{width:416px;height:447px;background:#f3f3f3;border-left:1px solid #8b949b;margin-left:8px}
.find+.find{margin-left:45.500px}
.find+.find.large{margin-left:48px;width:414px}
.find h3{display:flex;align-items:center;height:20px;margin:33px 0 0 34px;font-size:15.800px;font-weight:700;color:#122b33}
.find h3 svg{width:15px;height:15px;margin-right:11px}
.grid{display:grid;grid-template-columns:158px 158px;gap:10.900px 30px;margin:9px 0 0 34px}
.grid span{height:33px;border:1px solid #c8c8c8;border-radius:4px;background:#fff;line-height:31px;padding-left:13px;font-size:14px}
.grid .ph-t{font-style:italic;color:#c3c6c8}
.grid .pick{display:flex;align-items:center;justify-content:space-between;padding:0 5px 0 16px;color:#555}
.pick::after{content:"";border:4px solid transparent;border-top:7px solid #444;border-bottom:0}
.btn{display:block;width:346px;height:34px;margin-left:34px;border:1px solid #ddd;border-radius:4px;text-align:center;font-size:14px;line-height:32px}
.reset{margin-top:40px;background:#fafafa;color:#d0d3d5}
.go{margin-top:20px;background:#5cb85c;border-color:#4cae4c;color:#fff}
.open .menu{height:177px;background:#5b6770;color:#9ba5ac;font-size:14.100px;font-weight:700;text-align:right;padding:26px 34px 0 0}
.menu li{height:48px;line-height:22px}
.menu li:nth-child(2){height:55px}
.menu li svg{display:inline-block;width:15px;height:13px;margin-right:4px;vertical-align:-2px}
.open .grid{margin-top:0}
.grid .cut{height:6.500px;border-top:0;border-radius:0 0 4px 4px}
.large .mbar{height:73px;padding-left:16px}
.large .burger{width:36px}
.large .burger i{height:6.500px;margin-bottom:5px}
.large .burger b{font-size:13.300px;margin-top:9px}
.large .tx{height:29px}
.large .me{width:23px;height:27px;margin:24px 49px 0 auto}
.large .menu{height:197px;padding:31px 15px 0 15px;font-size:15.600px}
.large .menu li{padding-right:23px;height:36px}
.large .menu .hot{background:#eee;height:54px;line-height:54px;margin:1px 0 23px}
.large .grid{margin-left:38px;grid-template-columns:155px 155px;gap:34px}
.large .cut{height:12px}
.large .btn{margin-left:38px;width:344.500px;height:37px;line-height:35px;font-size:15.500px}
.large .reset{margin-top:45px}
.large .go{margin-top:23px}

/* Handset */
.handset{position:relative;width:444px;height:884px;margin-left:469.500px;padding:101px 0 0 34px}
.shell{position:absolute;left:0;top:0;width:444px;height:884px}
.screen{position:relative;width:376px;height:666px;border:1px solid #d5d8da;border-top:0}
.split{display:flex;height:600px;overflow:hidden}
.side{width:249.500px;background:#fff}
.top{display:flex;justify-content:space-between;align-items:center;padding:10px 17px 0 15px;height:38px}
.logo.dark{color:#5b6770}
.dark i{width:46px;font-size:26px;line-height:26px}
.top svg{width:15px;height:15px}
.side a{display:block;width:210px;height:63px;margin:17px 0 0 20px;border:1px solid #dcdcdc;text-align:center;font-size:14px;line-height:61px;color:#808080}
.side a+a{margin-top:20px}
.dim{flex:1;background:#494949;padding-top:41px;font-size:14px}
.page{width:92px;height:600px;background:#4c4c4c;border:1px solid #424242;border-left:0}
.page>a{display:block;margin:22px 0 0 38px;line-height:18px;font-weight:700;text-decoration:underline;color:#0a1418}
.tt{height:65px;font-size:22px;line-height:68px;color:#2c2f31;background:linear-gradient(#4c4c4c,#464b4d);border-bottom:1px solid #414141}
.hh{height:47px;line-height:57px;padding-left:2px;font-size:15.900px;font-weight:700;color:#10263a;border-bottom:1px solid #444;width:41px}
.page .e2{margin-top:69px}
.vv{line-height:18px;margin-top:7px}
.page .e3{margin-top:43px}
.ln{width:41px;height:1px;background:#434343;margin-top:113px}
.page span{display:block;width:45px;height:33px;margin-top:65px;background:#fff;border-radius:0 4px 4px 0;line-height:33px;color:#333}

/* Mobile account screens */
.mob{width:374.600px;height:928px;background:#f3f3f3;border-left:1px solid #8b949b}
.m2{margin-left:115.400px;height:1072px}
.m3{margin:-1.500px 0 0 107.400px;height:1038px}
.m4{height:1066px}
.m5{margin-left:113.400px;height:1153px}
.m6{margin:-2px 0 0 109.400px;height:1046px}
.mob .card{margin:41.400px 0 0 51px;width:288px;background:#fff;border:1px solid #dde0e2;border-radius:3px;box-shadow:0 1px 2px rgba(0,0,0,.1);padding-bottom:38px}
.m1 .card{margin-top:13.300px}
.mob .card h2{height:64px;padding-left:17px;font-size:24px;line-height:67px;color:#929ca4;background:linear-gradient(#fff,#ecf8fe);border-bottom:1px solid #d9e2ea}
.mob .in{margin:0 19px;border:1px solid #f6f6f6;border-top:0;padding-bottom:21px}
.mob h3{width:218px;font-size:15.900px;font-weight:700;line-height:20px;color:#337ab7;padding:18px 0 9px;border-bottom:1px solid #e5e5e5;margin-bottom:25px}
.mob .row~h3{padding-top:0}
.mob .row{display:grid;grid-template-columns:69px 146px auto;height:85.800px;font-size:14px;line-height:16px;color:#222}
.mob .ico{width:48px;height:42px}
.mob .none{background:none}
.mob .g-user{width:20px;height:24px}
.mob .row>div,.mob .row>a{margin-top:-2px}
.mob .v{margin-top:8px;line-height:18px}
.mob .x{line-height:20px;margin-top:1px}
.x b{color:#9aa5ad;margin-right:16px}
.mob .tel{height:99.600px}
.mob .key{height:97.300px}
.mob .stars{padding-left:15px}
.mob .on i{font-size:13px}
.mob .fld{width:155.500px;height:34px;margin-top:7px;border:1px solid #bbb;border-radius:4px}
.mob .ext{width:94px}
.mob .act{width:155.500px;margin-top:20px;line-height:36px}
.mob .act a{margin-right:19px}
.mob .save{width:58px;height:34px;line-height:32px}
.mob .combo{width:155.500px;height:34px;margin-top:7px;line-height:32px}
.mob .combo span:first-child{width:98px}
.edit-name.row{height:201.700px}
.edit-mail.row{height:162.800px}
.edit-mail .l,.edit-key .l{line-height:20px;margin-top:-2px}
.mob .edit-tel.row{height:219px}
.edit-key.row{height:293.500px}
.m4 .card{padding-bottom:28px}
.mob .help{margin-left:18.800px;width:199.400px;height:186.400px;padding-top:16px;font-size:14px;color:#333}
.mob .help h4{font-size:16px;line-height:20px}
.mob .help p{margin-top:17px;line-height:20px}
.edit-key .hp{margin-top:1px}
.m6 .card{margin-top:0;border-top:0;padding-bottom:30px}
.m6 .in{padding-top:8px}
.m6 .edit-key.row{height:538px}
.mob .rules{line-height:20px;margin-top:26px}
.mob .rules ul{padding-left:40px}
```
